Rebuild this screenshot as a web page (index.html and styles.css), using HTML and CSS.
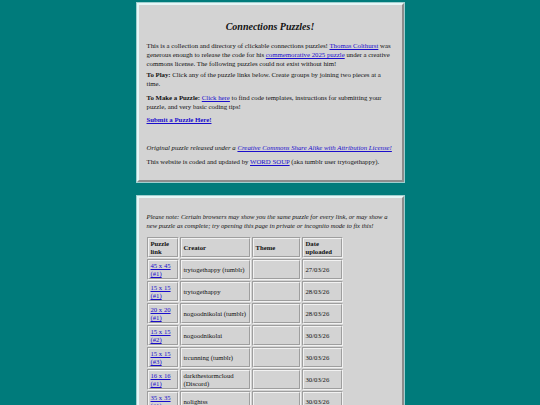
FILE: index.html
```html
<!DOCTYPE html>
<html>
<head>
<meta charset="utf-8">
<link rel="stylesheet" href="styles.css">
</head>
<body>
<div class="panel top">
  <h1 class="title">Connections Puzzles!</h1>
  <p class="intro">This is a collection and directory of clickable connections puzzles! <a href="#">Thomas Colthurst</a> was generous enough to release the code for his <a href="#">commemorative 2025 puzzle</a> under a creative commons license. The following puzzles could not exist without him!</p>
  <p class="play"><b>To Play:</b> Click any of the puzzle links below. Create groups by joining two pieces at a<br>time.</p>
  <p><b>To Make a Puzzle:</b> <a href="#">Click here</a> to find code templates, instructions for submitting your puzzle, and very basic coding tips!</p>
  <p><a href="#" class="submit">Submit a Puzzle Here!</a></p>
  <p class="spacer"></p>
  <p class="orig"><i>Original puzzle released under a <a href="#">Creative Commons Share Alike with Attribution License!</a></i></p>
  <p class="last">This website is coded and updated by <a href="#">WORD SOUP</a> (aka tumblr user trytogethappy).</p>
</div>
<div class="panel list">
  <p class="note"><i>Please note: Certain browsers may show you the same puzzle for every link, or may show a new puzzle as complete; try opening this page in private or incognito mode to fix this!</i></p>
  <table class="puzzles">
    <tr><th class="c1">Puzzle link</th><th class="c2">Creator</th><th class="c3">Theme</th><th class="c4">Date uploaded</th></tr>
    <tr><td><a href="#">45 x 45 (#1)</a></td><td>trytogethappy (tumblr)</td><td></td><td>27/03/26</td></tr>
    <tr><td><a href="#">15 x 15 (#1)</a></td><td>trytogethappy</td><td></td><td>28/03/26</td></tr>
    <tr><td><a href="#">20 x 20 (#1)</a></td><td>nogoodnikolai (tumblr)</td><td></td><td>28/03/26</td></tr>
    <tr><td><a href="#">15 x 15 (#2)</a></td><td>nogoodnikolai</td><td></td><td>30/03/26</td></tr>
    <tr><td><a href="#">15 x 15 (#3)</a></td><td>trcunning (tumblr)</td><td></td><td>30/03/26</td></tr>
    <tr><td><a href="#">16 x 16 (#1)</a></td><td>darkthestormcloud (Discord)</td><td></td><td>30/03/26</td></tr>
    <tr><td><a href="#">35 x 35 (#1)</a></td><td>nolightss</td><td></td><td>30/03/26</td></tr>
  </table>
</div>
</body>
</html>
```
FILE: styles.css
```css
html, body {
  margin: 0;
  padding: 0;
}
body {
  background: #007b7b;
  font-family: "Liberation Serif", "Times New Roman", serif;
  font-size: 6.8px;
  line-height: 9px;
  color: #111;
  padding-top: 3px;
}
.panel {
  width: 247px;
  margin: 0 auto;
  background: #d3d3d3;
  border-style: solid;
  border-width: 2px;
  border-color: #e6f6f6 #8c8c8c #8c8c8c #e6f6f6;
  box-shadow: 0 0 0 1px #9fcfcf;
  padding: 15px 8px 14px 8px;
}
.list {
  margin-top: 14px;
  padding-top: 14px;
}
.title {
  font-size: 10px;
  font-style: italic;
  font-weight: bold;
  text-align: center;
  margin: 0 0 8px 0;
  line-height: 13px;
}
p {
  margin: 0 0 4px 0;
}
.intro {
  margin-bottom: 2px;
}
.play {
  margin-bottom: 5px;
}
.spacer {
  height: 15px;
  margin: 0;
}
.orig {
  margin-bottom: 5px;
}
.last {
  margin-bottom: 0;
}
a {
  color: #1a0dcc;
  text-decoration: underline;
}
.submit {
  font-weight: bold;
}
.note {
  font-size: 6.6px;
  margin-bottom: 6px;
}
.puzzles {
  border-collapse: separate;
  border-spacing: 1px;
  margin-left: -1px;
}
.puzzles th, .puzzles td {
  border: 2px groove #f2f2f2;
  padding: 1px 1px 0 2px;
  text-align: left;
  vertical-align: middle;
  font-size: 6.7px;
  line-height: 8px;
  height: 16px;
}
.c1 { width: 25px; }
.c2 { width: 64px; }
.c3 { width: 42px; }
.c4 { width: 34px; }
```
